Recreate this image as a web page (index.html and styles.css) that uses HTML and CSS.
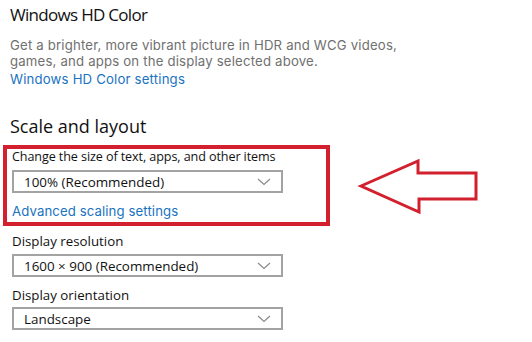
FILE: index.html
```html
<!DOCTYPE html>
<html>
<head>
<meta charset="utf-8">
<link rel="stylesheet" href="styles.css">
</head>
<body>
<div class="page">
  <h1 class="title title-hd">Windows HD Color</h1>
  <p class="desc">Get a brighter, more vibrant picture in HDR and WCG videos,<br>games, and apps on the display selected above.</p>
  <a class="link link-hd">Windows HD Color settings</a>
  <h2 class="title title-scale">Scale and layout</h2>
  <div class="highlight">
    <div class="label label-in">Change the size of text, apps, and other items</div>
    <div class="select">
      <span>100% (Recommended)</span>
      <svg class="chev" width="14" height="8" viewBox="0 0 14 8"><path d="M1 1 L7 6.5 L13 1" fill="none" stroke="#8a8a8a" stroke-width="1.2"/></svg>
    </div>
    <a class="link link-adv">Advanced scaling settings</a>
  </div>
  <div class="label label-out label-res">Display resolution</div>
  <div class="select select-out">
    <span>1600 × 900 (Recommended)</span>
    <svg class="chev" width="14" height="8" viewBox="0 0 14 8"><path d="M1 1 L7 6.5 L13 1" fill="none" stroke="#8a8a8a" stroke-width="1.2"/></svg>
  </div>
  <div class="label label-out label-ori">Display orientation</div>
  <div class="select select-out select-ori">
    <span>Landscape</span>
    <svg class="chev" width="14" height="8" viewBox="0 0 14 8"><path d="M1 1 L7 6.5 L13 1" fill="none" stroke="#8a8a8a" stroke-width="1.2"/></svg>
  </div>
</div>
<svg class="arrow" width="532" height="342" viewBox="0 0 532 342">
  <polygon points="361,186 418,161 418,173 476,173 476,199 419,199 419,212" fill="none" stroke="#d3202e" stroke-width="3" stroke-linejoin="miter"/>
</svg>
</body>
</html>
```
FILE: styles.css
```css
html, body {
  margin: 0;
  padding: 0;
  background: #ffffff;
}
body {
  font-family: "Open Sans", "Noto Sans", sans-serif;
  color: #000;
  width: 532px;
  height: 342px;
  overflow: hidden;
  position: relative;
}
.page {
  padding-top: 3px;
}
.title {
  margin: 0 0 0 10px;
  font-size: 18px;
  font-weight: 400;
  line-height: 24px;
  color: #111;
}
.title-hd {
  font-size: 17px;
  letter-spacing: -0.7px;
}
.title-scale {
  margin-top: 27px;
}
.desc {
  margin: 10px 0 0 10px;
  font-family: Inter, "Open Sans", sans-serif;
  font-size: 13.2px;
  letter-spacing: 0.18px;
  line-height: 16px;
  color: #707070;
}
.link {
  display: block;
  font-family: Inter, "Open Sans", sans-serif;
  font-size: 13.2px;
  letter-spacing: 0.1px;
  line-height: 16px;
  color: #1a73bf;
}
.link-hd {
  margin: 2px 0 0 10px;
  letter-spacing: 0.18px;
}
.highlight {
  margin: 7px 0 0 3px;
  width: 314px;
  border: 4px solid #d3202e;
  padding: 0 0 3px 5px;
}
.label {
  font-size: 13.3px;
  line-height: 16px;
  color: #111;
}
.label-in {
  font-size: 12.6px;
  letter-spacing: -0.1px;
}
.label-out {
  margin: 7px 0 0 12px;
}
.label-ori {
  margin-top: 10px;
}
.select {
  margin-top: 5px;
  width: 247px;
  height: 19px;
  border: 2px solid #a3a3a3;
  display: flex;
  align-items: center;
  justify-content: space-between;
  padding: 0 10px 0 10px;
  font-size: 13.4px;
  color: #111;
}
.select-out {
  margin-left: 12px;
}
.select-ori {
  margin-top: 4px;
}
.chev {
  display: block;
}
.link-adv {
  margin-top: 10px;
}
.arrow {
  position: absolute;
  left: 0;
  top: 0;
}
```
